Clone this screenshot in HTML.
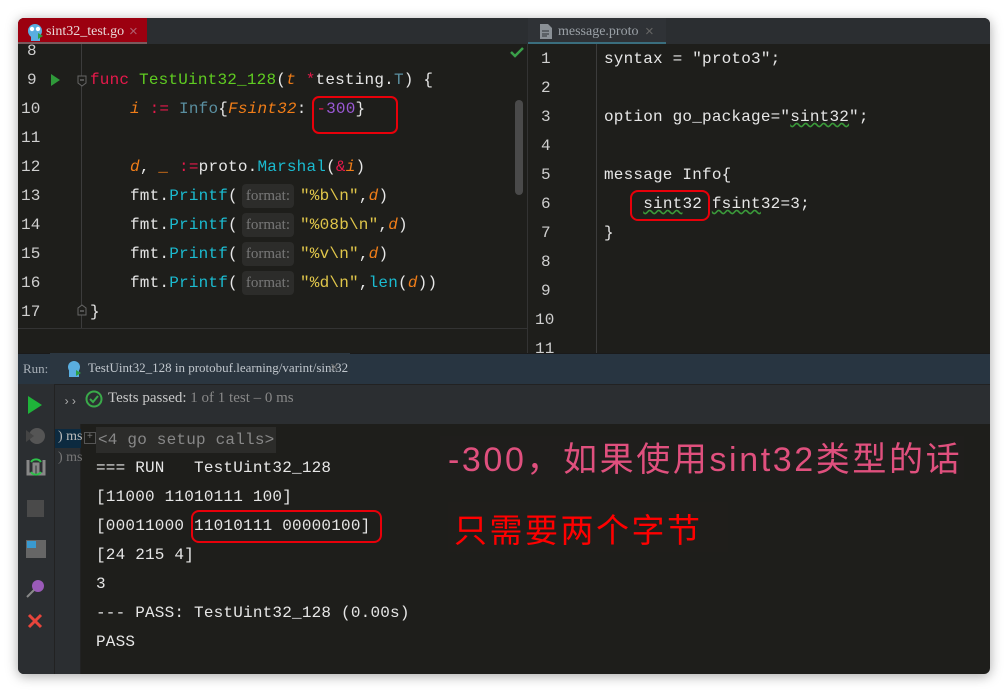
<!DOCTYPE html>
<html><head><meta charset="utf-8"><style>
*{margin:0;padding:0;box-sizing:border-box}
body{width:1008px;height:692px;background:#fff;position:relative;overflow:hidden;font-family:"Liberation Mono",monospace}
#win{position:absolute;left:18px;top:18px;width:972px;height:656px;background:#1e1e1b;border-radius:6px;overflow:hidden;box-shadow:0 2px 12px rgba(0,0,0,.35)}
.a{position:absolute;white-space:pre}
.m{font-family:"Liberation Mono",monospace;font-size:16px;letter-spacing:0.2px;color:#e6e6e6}
.s{font-family:"Liberation Serif",serif}
.k{color:#e6194b}.g{color:#5fcb21}.o{color:#f07d18;font-style:italic}.c{color:#1bbbd0}.t{color:#5a8fa0}.y{color:#e0c64a}.p{color:#9b59d6}
.hint{display:inline-block;background:#2c2c2a;color:#777;font-family:"Liberation Serif",serif;font-size:15px;border-radius:4px;padding:0 4px;letter-spacing:0;height:24px;line-height:24px;vertical-align:middle;margin:-6px 6px -6px 4px}
.ln{color:#cfcfcf}
</style></head><body>
<div id="win">
<!-- tab bar -->
<div class="a" style="left:0;top:0;width:972px;height:26px;background:#2b2e31"></div>
<div class="a" style="left:0;top:0;width:129px;height:26px;background:#9c0010;border-bottom:2px solid #7a5a5e"></div>
<svg class="a" style="left:8px;top:5px" width="18" height="18"><circle cx="9" cy="8" r="7" fill="#5aaee0"/><circle cx="6" cy="6" r="2.2" fill="#fff"/><circle cx="12" cy="6" r="2.2" fill="#fff"/><rect x="5" y="12" width="9" height="6" fill="#5aaee0"/><path d="M12 10 l5 3 -5 3z" fill="#2ea043"/></svg>
<div class="a s" style="left:28px;top:6px;font-size:14px;color:#e8d8d8">sint32_test.go</div>
<div class="a" style="left:111px;top:5px;font-size:15px;color:#b06070;font-family:'Liberation Sans'">×</div>
<div class="a" style="left:510px;top:0;width:138px;height:26px;background:#2f3236;border-bottom:2px solid #3a6e7e"></div>
<svg class="a" style="left:522px;top:6px" width="12" height="15"><path d="M0 0h8l4 4v11H0z" fill="#8a9096"/><path d="M2 7h7M2 10h7M2 12h5" stroke="#2f3236" stroke-width="1"/></svg>
<div class="a s" style="left:540px;top:6px;font-size:14px;color:#9aa0a6">message.proto</div>
<div class="a" style="left:627px;top:5px;font-size:15px;color:#666;font-family:'Liberation Sans'">×</div>
<div class="a" style="left:509px;top:26px;width:1px;height:309px;background:#333"></div>

<!-- left editor -->
<div class="a" style="left:63px;top:26px;width:1px;height:284px;background:#3c3c3c"></div>
<div class="a" style="left:0;top:310px;width:509px;height:1px;background:#333"></div>
<div class="a" style="left:497px;top:82px;width:8px;height:95px;background:#4a4a4a;border-radius:4px"></div>
<svg class="a" style="left:492px;top:28px" width="14" height="12"><path d="M1 6l4 4 8-8" stroke="#3aa04a" stroke-width="2.5" fill="none"/></svg>
<svg class="a" style="left:33px;top:56px" width="10" height="12"><path d="M0 0l9 6-9 6z" fill="#2f9a3a"/></svg>
<svg class="a" style="left:59px;top:57px" width="10" height="12"><path d="M1 1h8v7l-4 3-4-3z" stroke="#666" fill="#1e1e1b"/><path d="M3 5h4" stroke="#888"/></svg>
<svg class="a" style="left:59px;top:286px" width="10" height="12"><path d="M1 11h8V4L5 1 1 4z" stroke="#666" fill="#1e1e1b"/><path d="M3 7h4" stroke="#888"/></svg>
<div class="m">
<div class="a ln" style="left:9px;top:24px">8</div>
<div class="a ln" style="left:9px;top:53px">9</div>
<div class="a ln" style="left:3px;top:82px">10</div>
<div class="a ln" style="left:3px;top:111px">11</div>
<div class="a ln" style="left:3px;top:140px">12</div>
<div class="a ln" style="left:3px;top:169px">13</div>
<div class="a ln" style="left:3px;top:198px">14</div>
<div class="a ln" style="left:3px;top:227px">15</div>
<div class="a ln" style="left:3px;top:256px">16</div>
<div class="a ln" style="left:3px;top:285px">17</div>
<div class="a" style="left:72px;top:53px"><span class="k">func</span> <span class="g">TestUint32_128</span>(<span class="o">t</span> <span class="k">*</span>testing.<span class="t">T</span>) {</div>
<div class="a" style="left:112px;top:82px"><span class="o">i</span> <span class="k">:=</span> <span class="t">Info</span>{<span class="o">Fsint32</span>: <span class="k">-</span><span class="p">300</span>}</div>
<div class="a" style="left:112px;top:140px"><span class="o">d</span>, <span class="o">_</span> <span class="k">:=</span>proto.<span class="c">Marshal</span>(<span class="k">&amp;</span><span class="o">i</span>)</div>
<div class="a" style="left:112px;top:169px">fmt.<span class="c">Printf</span>(<span class="hint">format:</span><span class="y">"%b\n"</span>,<span class="o">d</span>)</div>
<div class="a" style="left:112px;top:198px">fmt.<span class="c">Printf</span>(<span class="hint">format:</span><span class="y">"%08b\n"</span>,<span class="o">d</span>)</div>
<div class="a" style="left:112px;top:227px">fmt.<span class="c">Printf</span>(<span class="hint">format:</span><span class="y">"%v\n"</span>,<span class="o">d</span>)</div>
<div class="a" style="left:112px;top:256px">fmt.<span class="c">Printf</span>(<span class="hint">format:</span><span class="y">"%d\n"</span>,<span class="c">len</span>(<span class="o">d</span>))</div>
<div class="a" style="left:72px;top:285px">}</div>
</div>
<div class="a" style="left:294px;top:78px;width:86px;height:38px;border:2.5px solid #e8000a;border-radius:7px"></div>

<!-- right editor -->
<div class="a" style="left:578px;top:26px;width:1px;height:309px;background:#3c3c3c"></div>
<div class="m">
<div class="a ln" style="left:523px;top:32px">1</div>
<div class="a ln" style="left:523px;top:61px">2</div>
<div class="a ln" style="left:523px;top:90px">3</div>
<div class="a ln" style="left:523px;top:119px">4</div>
<div class="a ln" style="left:523px;top:148px">5</div>
<div class="a ln" style="left:523px;top:177px">6</div>
<div class="a ln" style="left:523px;top:206px">7</div>
<div class="a ln" style="left:523px;top:235px">8</div>
<div class="a ln" style="left:523px;top:264px">9</div>
<div class="a ln" style="left:517px;top:293px">10</div>
<div class="a ln" style="left:517px;top:322px">11</div>
<div class="a" style="left:586px;top:32px">syntax = "proto3";</div>
<div class="a" style="left:586px;top:90px">option go_package="<span style="text-decoration:underline wavy #3a9a3a">sint32</span>";</div>
<div class="a" style="left:586px;top:148px">message Info{</div>
<div class="a" style="left:586px;top:177px">    <span style="text-decoration:underline wavy #3a9a3a">sint</span>32 <span style="text-decoration:underline wavy #3a9a3a">fsint</span>32=3;</div>
<div class="a" style="left:586px;top:206px">}</div>
</div>
<div class="a" style="left:612px;top:172px;width:80px;height:31px;border:2.5px solid #e8000a;border-radius:8px"></div>

<!-- run bar -->
<div class="a" style="left:0;top:335px;width:972px;height:31px;background:#283541;border-top:1px solid #1a1a1a"></div>
<div class="a" style="left:32px;top:335px;width:300px;height:31px;background:#2b3640"></div>
<div class="a s" style="left:5px;top:343px;font-size:13px;color:#a8b0b8">Run:</div>
<svg class="a" style="left:48px;top:342px" width="16" height="18"><circle cx="8" cy="7" r="6" fill="#5aaee0"/><rect x="3" y="10" width="10" height="7" fill="#5aaee0"/><path d="M10 10l5 3-5 3z" fill="#2ea043"/></svg>
<div class="a s" style="left:70px;top:342px;font-size:13px;color:#c0c6cc">TestUint32_128 in protobuf.learning/varint/sint32</div>
<div class="a" style="left:312px;top:341px;font-size:15px;color:#777;font-family:'Liberation Sans'">×</div>
<!-- tests row -->
<div class="a" style="left:0;top:366px;width:972px;height:40px;background:#2b2e31;border-top:1px solid #222"></div>
<div class="a" style="left:0;top:366px;width:37px;height:290px;background:#2b2e31;border-right:1px solid #222"></div>
<div class="a" style="left:37px;top:406px;width:26px;height:250px;background:#2b2e31;border-right:1px solid #222"></div>
<div class="a" style="left:45px;top:377px;font-size:12px;color:#aaa">››</div>
<svg class="a" style="left:67px;top:372px" width="18" height="18"><circle cx="9" cy="9" r="7.5" stroke="#3aaa4a" stroke-width="2" fill="none"/><path d="M5 9l3 3 5-6" stroke="#3aaa4a" stroke-width="2" fill="none"/></svg>
<div class="a s" style="left:90px;top:372px;font-size:15px;color:#c8c8c8">Tests passed: <span style="color:#888">1 of 1 test – 0 ms</span></div>
<!-- sidebar icons -->
<svg class="a" style="left:10px;top:378px" width="16" height="18"><path d="M0 0l14 9-14 9z" fill="#1fb33a"/></svg>
<svg class="a" style="left:8px;top:408px" width="20" height="20"><circle cx="11" cy="10" r="8" fill="#555"/><path d="M0 4l8 6-8 6z" fill="#444"/></svg>
<svg class="a" style="left:8px;top:438px" width="20" height="22"><path d="M2 4v14h6V8h4v10h6V4" stroke="#888" stroke-width="3" fill="none"/><path d="M5 6a6 6 0 0 1 10 0M15 16a6 6 0 0 1-10 0" stroke="#2ec04a" stroke-width="2" fill="none"/></svg>
<div class="a" style="left:9px;top:482px;width:17px;height:17px;background:#4a4a4a"></div>
<div class="a" style="left:8px;top:522px;width:20px;height:18px;background:#666"></div>
<div class="a" style="left:9px;top:523px;width:9px;height:7px;background:#3a9ad0"></div>
<svg class="a" style="left:8px;top:560px" width="20" height="20"><circle cx="12" cy="8" r="6" fill="#9a5ab8"/><path d="M8 12l-7 7" stroke="#888" stroke-width="2"/></svg>
<svg class="a" style="left:9px;top:595px" width="16" height="16"><path d="M2 2l12 12M14 2L2 14" stroke="#e8453c" stroke-width="3"/></svg>
<div class="a s" style="left:37px;top:411px;width:26px;height:19px;background:#0c2a40;font-size:14px;color:#bbb;padding-left:3px">) ms</div>
<div class="a s" style="left:40px;top:432px;font-size:14px;color:#777">) ms</div>
<!-- console -->
<div class="m">
<div class="a" style="left:66px;top:414px;width:12px;height:12px;border:1px solid #555;font-size:10px;line-height:10px;color:#777;text-align:center">+</div>
<div class="a" style="left:78px;top:409px;background:#2c2c2a;color:#888;height:26px;line-height:26px;padding:0 2px">&lt;4 go setup calls&gt;</div>
<div class="a" style="left:78px;top:441px">=== RUN   TestUint32_128</div>
<div class="a" style="left:78px;top:470px">[11000 11010111 100]</div>
<div class="a" style="left:78px;top:499px">[00011000 11010111 00000100]</div>
<div class="a" style="left:78px;top:528px">[24 215 4]</div>
<div class="a" style="left:78px;top:557px">3</div>
<div class="a" style="left:78px;top:586px">--- PASS: TestUint32_128 (0.00s)</div>
<div class="a" style="left:78px;top:615px">PASS</div>
</div>
<div class="a" style="left:173px;top:492px;width:191px;height:33px;border:2.5px solid #e8000a;border-radius:8px"></div>
<!-- annotations -->
<div class="a" style="left:422px;top:418px;width:524px;height:44px;background:#1f1e1c"></div>
<div class="a" style="left:430px;top:414px;font-family:'Liberation Sans','Noto Sans CJK SC',sans-serif;font-size:34px;letter-spacing:2.6px;color:#e0507e">-300，如果使用sint32类型的话</div>
<div class="a" style="left:430px;top:484px;width:280px;height:50px;background:#1f1e1b"></div>
<div class="a" style="left:436px;top:486px;font-family:'Noto Sans CJK SC',sans-serif;font-size:33px;letter-spacing:2.5px;color:#ff0000">只需要两个字节</div>
</div>
</body></html>
